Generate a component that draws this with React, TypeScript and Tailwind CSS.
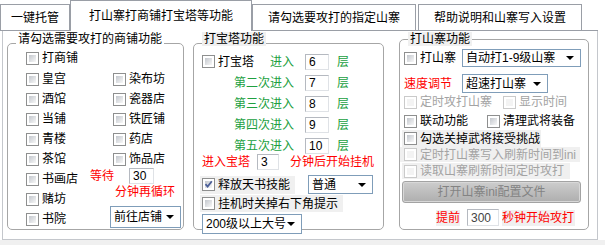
import React from "react";

const Box = ({ checked = false, disabled = false }: { checked?: boolean; disabled?: boolean }) => (
  <span
    className={`relative flex h-[13px] w-[13px] shrink-0 border bg-white p-[2px] ${
      disabled ? "border-[#cacaca]" : "border-[#8e8f8f]"
    }`}
  >
    <span
      className={`block h-full w-full ${
        disabled ? "bg-[#f3f3f3]" : "bg-linear-to-br from-[#c3c7cd] to-[#f8f8f8]"
      }`}
    />
    {checked && (
      <svg className="absolute left-0 top-0" width="11" height="11" viewBox="0 0 11 11">
        <path d="M2.5 5.2 L4.6 7.6 L8.8 2.2" stroke="#4a5e98" strokeWidth="1.8" fill="none" />
      </svg>
    )}
  </span>
);

const Check = ({
  label,
  checked,
  disabled,
}: {
  label: string;
  checked?: boolean;
  disabled?: boolean;
}) => (
  <span className="flex items-center gap-[3px]">
    <Box checked={checked} disabled={disabled} />
    <span className={disabled ? "text-[#a3a3a3]" : ""}>{label}</span>
  </span>
);

const Arrow = () => (
  <svg width="8" height="4" viewBox="0 0 8 4" className="shrink-0">
    <path d="M0 0H8L4 4Z" fill="#000" />
  </svg>
);

const Select = ({ value, className }: { value: string; className: string }) => (
  <div
    className={`flex items-center justify-between border border-[#7f9db9] bg-white pl-[3px] pr-[6px] ${className}`}
  >
    <span>{value}</span>
    <Arrow />
  </div>
);

const Field = ({ value, className }: { value: string; className: string }) => (
  <div
    className={`flex h-4 items-center border border-[#b5b9c0] border-b-[#dfe2e6] border-r-[#dfe2e6] bg-white pl-[3px] ${className}`}
  >
    {value}
  </div>
);

const Tab = ({ label, active, className }: { label: string; active?: boolean; className: string }) => (
  <div
    className={`flex items-center justify-center border border-b-0 border-[#9a9ea6] bg-white ${
      active ? "relative -mb-px h-[31px]" : "h-[26px]"
    } ${className}`}
  >
    {label}
  </div>
);

const shops: [string, string][] = [
  ["皇宫", "染布坊"],
  ["酒馆", "瓷器店"],
  ["当铺", "铁匠铺"],
  ["青楼", "药店"],
  ["茶馆", "饰品店"],
];

const floors = ["第二次进入", "第三次进入", "第四次进入", "第五次进入"];
const floorVals = ["7", "8", "9", "10"];

export default function App() {
  return (
    <div className="h-[245px] w-[605px] overflow-hidden bg-white font-['Liberation_Sans','Noto_Sans_CJK_SC',sans-serif] text-[12px] leading-4 text-black">
      {/* tab strip */}
      <div className="flex h-[31px] w-[598px] items-end border-b border-[#9a9ea6]">
        <Tab label="一键托管" className="w-[70px]" />
        <Tab label="打山寨打商铺打宝塔等功能" active className="w-[182px]" />
        <Tab label="请勾选要攻打的指定山寨" className="w-[164px]" />
        <Tab label="帮助说明和山寨写入设置" className="ml-[2px] w-[164px]" />
      </div>

      {/* tab page */}
      <div className="ml-[2px] flex h-[209px] w-[596px] items-start border-x border-b border-[#c4c7cc]">
        {/* shops */}
        <fieldset className="ml-[4px] h-[199px] w-[177px] rounded-[5px] border border-[#a6a6a6]">
          <legend className="ml-[8px] px-[2px] pb-2 leading-4">请勾选需要攻打的商铺功能</legend>
          <div className="pl-[18px]">
            <div className="-mt-[7px] flex h-5 items-center">
              <Check label="打商铺" />
            </div>
            <div className="mt-px grid grid-cols-[87px_1fr]">
              {shops.map(([a, b]) => (
                <React.Fragment key={a}>
                  <div className="flex h-5 items-center">
                    <Check label={a} />
                  </div>
                  <div className="flex h-5 items-center">
                    <Check label={b} />
                  </div>
                </React.Fragment>
              ))}
            </div>
            <div className="flex">
              <div className="w-[64px]">
                {["书画店", "赌坊", "书院"].map((s) => (
                  <div key={s} className="flex h-5 items-center">
                    <Check label={s} />
                  </div>
                ))}
              </div>
              <div className="-mt-px text-[#ff0000]">
                <div className="flex h-4 items-center">
                  <span>等待</span>
                  <Field value="30" className="ml-[15px] w-[25px] text-black" />
                </div>
                <div className="flex h-4 items-center pl-[25px]">分钟再循环</div>
                <Select value="前往店铺" className="ml-[20px] mt-[6px] h-[22px] w-[71px] text-black" />
              </div>
            </div>
          </div>
        </fieldset>

        {/* tower */}
        <fieldset className="ml-[9px] h-[199px] w-[191px] rounded-[5px] border border-[#a6a6a6]">
          <legend className="ml-[8px] pb-2 leading-4">
            <span className="bg-[#f0f0f0] px-[2px]">打宝塔功能</span>
          </legend>
          <div className="-mt-[3px] grid grid-cols-[100px_24px_auto] items-center gap-x-[11px] text-[#20a040]">
            <div className="flex h-[19px] items-center justify-between pl-[8px]">
              <span className="text-black">
                <Check label="打宝塔" />
              </span>
              <span>进入</span>
            </div>
            <Field value="6" className="text-black" />
            <span className="-ml-[3px]">层</span>
            {floors.map((f, i) => (
              <React.Fragment key={f}>
                <div className="mt-[2px] flex h-[19px] items-center justify-end">{f}</div>
                <Field value={floorVals[i]} className="mt-[2px] text-black" />
                <span className="-ml-[3px] mt-[2px]">层</span>
              </React.Fragment>
            ))}
          </div>
          <div className="-mt-px flex h-4 items-center pl-[8px] text-[#ff0000]">
            <span>进入宝塔</span>
            <Field value="3" className="ml-[7px] w-[22px] text-black" />
            <span className="ml-[11px]">分钟后开始挂机</span>
          </div>
          <div className="mt-[5px] flex h-[19px] items-center pl-[6px]">
            <span className="flex h-[18px] items-center bg-[#f0f0f0] pl-[2px] pr-[5px]">
              <Check label="释放天书技能" checked />
            </span>
            <Select value="普通" className="ml-[13px] h-[19px] w-[65px]" />
          </div>
          <div className="mt-px flex pl-[6px]">
            <span className="flex h-[17px] items-center bg-[#f0f0f0] pl-[2px] pr-[5px]">
              <Check label="挂机时关掉右下角提示" />
            </span>
          </div>
          <Select value="200级以上大号" className="ml-[8px] mt-[2px] h-[20px] w-[100px]" />
        </fieldset>

        {/* fort */}
        <fieldset className="ml-[15px] h-[199px] w-[190px] rounded-[5px] border border-[#a6a6a6]">
          <legend className="ml-[8px] leading-4">
            <span className="bg-[#f0f0f0] px-[2px]">打山寨功能</span>
          </legend>
          <div className="mt-[2px] flex h-[18px] items-center pl-[4px]">
            <Check label="打山寨" />
            <Select value="自动打1-9级山寨" className="ml-[6px] h-[18px] w-[119px]" />
          </div>
          <div className="mt-[7px] flex h-[19px] items-center pl-[4px]">
            <span className="text-[#ff0000]">速度调节</span>
            <Select value="超速打山寨" className="ml-[10px] h-[19px] w-[86px]" />
          </div>
          <div className="flex h-[18px] items-center pl-[4px]">
            <span className="w-[99px]">
              <Check label="定时攻打山寨" disabled />
            </span>
            <Check label="显示时间" disabled />
          </div>
          <div className="mt-px flex h-[18px] items-center pl-[4px]">
            <span className="w-[83px]">
              <Check label="联动功能" />
            </span>
            <Check label="清理武将装备" />
          </div>
          <div className="flex pl-[2px]">
            <span className="flex h-[17px] items-center bg-[#f0f0f0] pl-[2px] pr-px">
              <Check label="勾选关掉武将接受挑战" />
            </span>
          </div>
          <div className="flex">
            <span className="flex h-[15px] w-[180px] items-center bg-[#f0f0f0] pl-[4px]">
              <Check label="定时打山寨写入刷新时间到ini" disabled />
            </span>
          </div>
          <div className="mt-px flex pl-[2px]">
            <span className="flex h-[16px] items-center bg-[#f0f0f0] pl-[2px] pr-[6px]">
              <Check label="读取山寨刷新时间定时攻打" disabled />
            </span>
          </div>
          <div className="ml-[2px] mt-[2px] flex h-[22px] w-[179px] items-center justify-center rounded-[3px] border border-[#a3a3a3] bg-linear-to-b from-[#cdcdcd] to-[#aeaeae] text-[#838383] shadow-[inset_0_0_0_1px_#d8d8d8]">
            打开山寨ini配置文件
          </div>
          <div className="mt-[6px] flex h-[17px] items-center text-[#ff0000]">
            <span className="ml-[36px] bg-[#f0f0f0]">提前</span>
            <Field value="300" className="ml-[7px] h-[17px] w-[32px] text-[#444]" />
            <span className="ml-[3px] bg-[#f0f0f0] pr-px">秒钟开始攻打</span>
          </div>
        </fieldset>
      </div>
      <div className="h-[5px] bg-[#f0f0f0]" />
    </div>
  );
}
